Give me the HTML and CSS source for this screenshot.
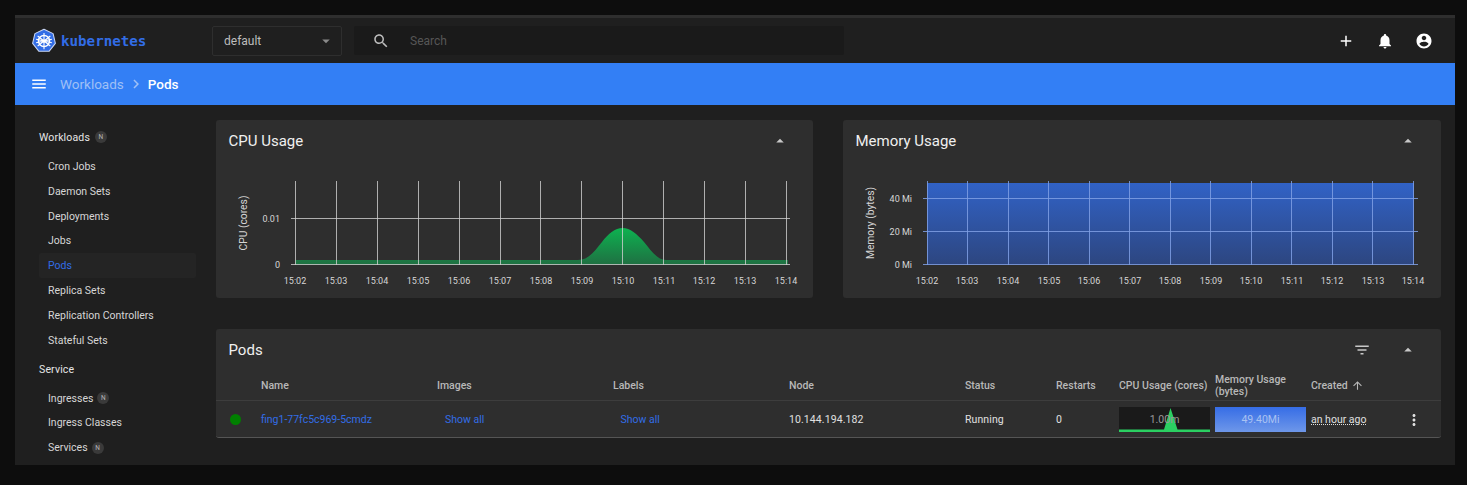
FILE: index.html
```html
<!DOCTYPE html>
<html>
<head>
   <title>Pods - Kubernetes Dashboard</title>
   <link rel="stylesheet" href="styles.css">
</head>
<body>
   <div class="app">
      <header class="toolbar">
         <div class="brand">
            <svg class="logo" viewBox="0 0 32 32" width="26" height="26">
               <path d="M16 1.5l11.2 5.4 2.8 12.1-7.8 9.7H9.8L2 19 4.800 6.900z" fill="#326de6" stroke="#c9d6f2" stroke-width="1.300" stroke-linejoin="round"/>
               <g fill="none" stroke="#fff">
                  <circle cx="16" cy="16" r="6.800" stroke-width="1.800"/>
                  <path d="M16 6v20M8.200 9.800l15.600 12.400M23.800 9.800L8.200 22.200M6.300 18.200l19.400-4.400M25.700 18.200L6.300 13.800" stroke-width="1.300"/>
               </g>
               <circle cx="16" cy="16" r="2" fill="#fff"/>
            </svg>
            <span class="brand-name">kubernetes</span>
         </div>
         <div class="ns-select">
            <span>default</span>
            <svg class="icon-14" viewBox="0 0 24 24"><path d="M7 10l5 5 5-5z"/></svg>
         </div>
         <div class="search">
            <svg class="icon-18" viewBox="0 0 24 24"><path d="M15.500 14h-.79l-.28-.27C15.410 12.590 16 11.110 16 9.500 16 5.910 13.090 3 9.500 3S3 5.910 3 9.500 5.910 16 9.500 16c1.610 0 3.090-.59 4.230-1.570l.27.28v.79l5 4.990L20.490 19l-4.990-5zm-6 0C7.010 14 5 11.990 5 9.500S7.010 5 9.500 5 14 7.010 14 9.500 11.990 14 9.500 14z"/></svg>
            <span>Search</span>
         </div>
         <div class="actions">
            <svg viewBox="0 0 24 24"><path d="M19 13h-6v6h-2v-6H5v-2h6V5h2v6h6v2z"/></svg>
            <svg viewBox="0 0 24 24"><path d="M12 22c1.100 0 2-.9 2-2h-4c0 1.100.89 2 2 2zm6-6v-5c0-3.070-1.640-5.640-4.500-6.320V4c0-.83-.67-1.500-1.500-1.500s-1.500.67-1.500 1.500v.68C7.630 5.360 6 7.920 6 11v5l-2 2v1h16v-1l-2-2z"/></svg>
            <svg viewBox="0 0 24 24"><path d="M12 2C6.480 2 2 6.480 2 12s4.480 10 10 10 10-4.480 10-10S17.520 2 12 2zm0 3c1.660 0 3 1.340 3 3s-1.340 3-3 3-3-1.340-3-3 1.340-3 3-3zm0 14.200c-2.500 0-4.710-1.280-6-3.220.03-1.990 4-3.080 6-3.080 1.990 0 5.970 1.090 6 3.080-1.290 1.940-3.500 3.220-6 3.220z"/></svg>
         </div>
      </header>

      <div class="crumbs">
         <svg class="menu-icon" viewBox="0 0 24 24"><path d="M3 18h18v-2H3v2zm0-5h18v-2H3v2zm0-7v2h18V6H3z"/></svg>
         <span class="crumb">Workloads</span>
         <svg class="crumb-sep" viewBox="0 0 24 24"><path d="M10 6L8.590 7.410 13.170 12l-4.580 4.590L10 18l6-6z"/></svg>
         <span class="crumb-current">Pods</span>
      </div>

      <div class="content">
         <nav class="sidebar">
            <div class="nav-head">Workloads <span class="badge">N</span></div>
            <a class="nav-item">Cron Jobs</a>
            <a class="nav-item">Daemon Sets</a>
            <a class="nav-item">Deployments</a>
            <a class="nav-item">Jobs</a>
            <a class="nav-item active">Pods</a>
            <a class="nav-item">Replica Sets</a>
            <a class="nav-item">Replication Controllers</a>
            <a class="nav-item">Stateful Sets</a>
            <div class="nav-head">Service</div>
            <a class="nav-item">Ingresses <span class="badge">N</span></a>
            <a class="nav-item">Ingress Classes</a>
            <a class="nav-item">Services <span class="badge">N</span></a>
         </nav>

         <main class="main">
            <div class="charts">
               <section class="card">
                  <div class="card-head">
                     <h2>CPU Usage</h2>
                     <svg class="collapse" viewBox="0 0 24 24"><path d="M7 14l5-5 5 5z"/></svg>
                  </div>
                  <svg class="chart" viewBox="0 42 597 136">
                     <defs>
                        <linearGradient id="green" x1="0" y1="0" x2="0" y2="1">
                           <stop offset="0" stop-color="#0db250"/>
                           <stop offset="1" stop-color="#1f7042"/>
                        </linearGradient>
                     </defs>
                     <path fill="url(#green)" d="M79 144.500V140H362C372 140 378 132 386 122 392 114 399 108 406.700 108 414 108 421 114 428 122 436 132 442 140 450 140H572V144.500z"/>
                     <g class="grid">
                        <path d="M79.500 61v84M120.500 61v84M161.500 61v84M202.500 61v84M243.500 61v84M284.500 61v84M324.500 61v84M365.500 61v84M406.500 61v84M447.500 61v84M488.500 61v84M529.500 61v84M570.500 61v84"/>
                        <path d="M75 98.500H574M75 144.500H574"/>
                     </g>
                     <g class="tick-x" text-anchor="middle">
                        <text x="79" y="164">15:02</text><text x="120" y="164">15:03</text><text x="161" y="164">15:04</text><text x="202" y="164">15:05</text><text x="243" y="164">15:06</text><text x="284" y="164">15:07</text><text x="325" y="164">15:08</text><text x="366" y="164">15:09</text><text x="407" y="164">15:10</text><text x="448" y="164">15:11</text><text x="488" y="164">15:12</text><text x="529" y="164">15:13</text><text x="570" y="164">15:14</text>
                     </g>
                     <g class="tick-x" text-anchor="end">
                        <text x="64" y="101.500">0.01</text><text x="64" y="148">0</text>
                     </g>
                     <text class="axis-title" text-anchor="middle" transform="translate(31 103) rotate(-90)">CPU (cores)</text>
                  </svg>
               </section>
               <section class="card">
                  <div class="card-head">
                     <h2>Memory Usage</h2>
                     <svg class="collapse" viewBox="0 0 24 24"><path d="M7 14l5-5 5 5z"/></svg>
                  </div>
                  <svg class="chart" viewBox="0 42 598 136">
                     <defs>
                        <linearGradient id="blue" x1="0" y1="0" x2="0" y2="1">
                           <stop offset="0" stop-color="#3162c6"/>
                           <stop offset="1" stop-color="#2d4680"/>
                        </linearGradient>
                     </defs>
                     <rect x="84" y="63" width="487" height="81.500" fill="url(#blue)"/>
                     <g class="grid-blue">
                        <path d="M84.500 61v84M124.500 61v84M165.500 61v84M205.500 61v84M246.500 61v84M286.500 61v84M327.500 61v84M367.500 61v84M408.500 61v84M448.500 61v84M489.500 61v84M529.500 61v84M570.500 61v84"/>
                        <path d="M80 78.500H575M80 111.500H575M80 144.500H575"/>
                     </g>
                     <g class="tick-x" text-anchor="middle">
                        <text x="84" y="164">15:02</text><text x="124" y="164">15:03</text><text x="165" y="164">15:04</text><text x="206" y="164">15:05</text><text x="246" y="164">15:06</text><text x="287" y="164">15:07</text><text x="327" y="164">15:08</text><text x="368" y="164">15:09</text><text x="408" y="164">15:10</text><text x="449" y="164">15:11</text><text x="489" y="164">15:12</text><text x="530" y="164">15:13</text><text x="570" y="164">15:14</text>
                     </g>
                     <g class="tick-x" text-anchor="end">
                        <text x="69" y="82">40 Mi</text><text x="69" y="115">20 Mi</text><text x="69" y="148">0 Mi</text>
                     </g>
                     <text class="axis-title" text-anchor="middle" transform="translate(31 103) rotate(-90)">Memory (bytes)</text>
                  </svg>
               </section>
            </div>

            <section class="card pods">
               <div class="card-head">
                  <h2>Pods</h2>
                  <svg class="filter" viewBox="0 0 24 24"><path d="M10 18h4v-2h-4v2zM3 6v2h18V6H3zm3 7h12v-2H6v2z"/></svg>
                  <svg class="collapse" viewBox="0 0 24 24"><path d="M7 14l5-5 5 5z"/></svg>
               </div>
               <div class="row row-head">
                  <span></span>
                  <span>Name</span>
                  <span>Images</span>
                  <span>Labels</span>
                  <span>Node</span>
                  <span>Status</span>
                  <span>Restarts</span>
                  <span>CPU Usage (cores)</span>
                  <span>Memory Usage (bytes)</span>
                  <span class="sorted">Created
                     <svg viewBox="0 0 24 24"><path d="M4 12l1.410 1.410L11 7.830V20h2V7.830l5.580 5.590L20 12l-8-8-8 8z"/></svg>
                  </span>
               </div>
               <div class="row row-body">
                  <span class="dot"></span>
                  <a class="link">fing1-77fc5c969-5cmdz</a>
                  <a class="link show-all">Show all</a>
                  <a class="link show-all-2">Show all</a>
                  <span class="cell">10.144.194.182</span>
                  <span class="cell">Running</span>
                  <span class="cell">0</span>
                  <div class="spark">
                     <svg viewBox="0 0 91 25" preserveAspectRatio="none"><path d="M0 22.500H45L51.500 1 58.500 22.500H91V25H0z" fill="#2bd062"/></svg>
                     <span>1.00m</span>
                  </div>
                  <div class="spark spark-mem"><span>49.40Mi</span></div>
                  <span class="age">an hour ago</span>
                  <svg class="more" viewBox="0 0 24 24"><path d="M12 8c1.100 0 2-.9 2-2s-.9-2-2-2-2 .9-2 2 .9 2 2 2zm0 2c-1.100 0-2 .9-2 2s.9 2 2 2 2-.9 2-2-.9-2-2-2zm0 6c-1.100 0-2 .9-2 2s.9 2 2 2 2-.9 2-2-.9-2-2-2z"/></svg>
               </div>
            </section>
         </main>
      </div>
   </div>
</body>
</html>
```

FILE: styles.css
```css
html, body {
   height: 100%;
}

body {
   margin: 0;
   padding: 15px 0 0 15px;
   box-sizing: border-box;
   overflow: hidden;
   background-color: #0d0d0d;
   font-family: Roboto, 'Liberation Sans', sans-serif;
   font-size: 10.5px;
   color: #e6e6e6;
}

svg {
   fill: currentColor;
   flex: none;
}

.app {
   width: 1440px;
   height: 450px;
   overflow: hidden;
   background-color: #1f1f1f;
   border-top: 3px solid #2e2e2e;
   box-sizing: border-box;
}

.toolbar {
   height: 45px;
   display: flex;
   align-items: center;
   padding-left: 16px;
   background-color: #1f1f1f;
}

.brand {
   width: 181px;
   display: flex;
   align-items: center;
   gap: 4px;
}

.brand-name {
   font-family: 'DejaVu Sans Mono', monospace;
   font-weight: bold;
   font-size: 14.2px;
   color: #326de6;
}

.ns-select {
   width: 130px;
   height: 30px;
   box-sizing: border-box;
   margin-right: 12px;
   padding: 0 6px 0 11px;
   display: flex;
   align-items: center;
   justify-content: space-between;
   border: 1px solid #2e2e2e;
   border-radius: 2px;
   font-size: 12px;
   color: #bdbdbd;
}

.icon-14 {
   width: 18px;
   height: 18px;
   color: #8a8a8a;
}

.search {
   width: 490px;
   height: 29px;
   display: flex;
   align-items: center;
   gap: 20px;
   padding-left: 18px;
   box-sizing: border-box;
   background-color: #1a1a1a;
   border-radius: 2px;
   font-size: 12px;
   color: #565656;
}

.icon-18 {
   width: 18px;
   height: 18px;
   color: #bdbdbd;
}

.actions {
   margin-left: auto;
   margin-right: 22px;
   display: flex;
   gap: 21px;
   color: #fff;
}

.actions svg {
   width: 18px;
   height: 18px;
}

.crumbs {
   height: 42px;
   display: flex;
   align-items: center;
   padding-left: 15px;
   background-color: #337ff5;
   font-size: 13.5px;
   font-weight: 500;
}

.menu-icon {
   width: 18px;
   height: 18px;
   margin-right: 12px;
   color: #fff;
}

.crumb {
   color: #9fc0f6;
   font-weight: 400;
}

.crumb-sep {
   width: 18px;
   height: 18px;
   margin: 0 3px;
   color: #9fc0f6;
}

.crumb-current {
   color: #fff;
}

.content {
   display: flex;
   height: 360px;
}

.sidebar {
   width: 157px;
   flex: none;
   padding: 20px 20px 0 24px;
   overflow: hidden;
}

.nav-head {
   height: 24px;
   margin: 4.6px 0;
   display: flex;
   align-items: center;
   gap: 5px;
   letter-spacing: 0.15px;
   color: #e6e6e6;
}

.nav-head:first-child {
   margin: 0 0 5.2px;
}

.nav-item {
   height: 24.8px;
   padding-left: 9px;
   display: flex;
   align-items: center;
   gap: 4px;
   border-radius: 2px;
   color: #d6d6d6;
}

.nav-item.active {
   background-color: #242424;
   color: #326de6;
}

.badge {
   width: 12px;
   height: 12px;
   display: inline-flex;
   align-items: center;
   justify-content: center;
   border-radius: 50%;
   background-color: #3a3a3a;
   font-size: 6.5px;
   color: #b5b5b5;
}

.main {
   flex: 1;
   padding: 15px 14px 0 0;
}

.charts {
   display: flex;
   gap: 30px;
}

.card {
   flex: 1;
   background-color: #2e2e2e;
   border-radius: 3px;
}

.charts .card:first-child {
   flex: 0 0 597px;
}

.card-head {
   height: 42px;
   display: flex;
   align-items: center;
   padding: 0 24px 0 12.5px;
}

.card-head h2 {
   margin: 0 auto 0 0;
   font-size: 15px;
   font-weight: 400;
   color: #f0f0f0;
}

.collapse {
   width: 18px;
   height: 18px;
   color: #c8c8c8;
}

.filter {
   width: 18px;
   height: 18px;
   margin-right: 28px;
   color: #c8c8c8;
}

.chart {
   display: block;
   width: 100%;
   height: 136px;
}

.grid path {
   fill: none;
   stroke: #cfcfcf;
   stroke-opacity: 0.8;
   stroke-width: 1;
}

.grid-blue path {
   fill: none;
   stroke: #7f9fe4;
   stroke-opacity: 0.85;
   stroke-width: 1;
}

.tick-x {
   font-size: 9px;
   fill: #d6d6d6;
}

.axis-title {
   font-size: 10.3px;
   fill: #d6d6d6;
}

.pods {
   margin-top: 31px;
   height: 109px;
   border-bottom: 1px solid #555;
   box-sizing: border-box;
}

.pods .card-head {
   height: 41px;
}

.row {
   display: grid;
   grid-template-columns: 45px 176px 176px 176px 176px 91px 63px 96px 96px 1fr;
   align-items: center;
}

.row-head {
   height: 31px;
   padding-top: 1px;
   border-bottom: 1px solid #3d3d3d;
   box-sizing: border-box;
   font-weight: 500;
   color: #b8b8b8;
   line-height: 12px;
}

.row-head span:nth-child(9) {
   padding-right: 12px;
}

.sorted {
   display: flex;
   align-items: center;
   gap: 3px;
}

.sorted svg {
   width: 13px;
   height: 13px;
}

.row-body {
   position: relative;
   height: 36px;
   color: #e0e0e0;
}

.cell {
   letter-spacing: 0.1px;
}

.dot {
   width: 11px;
   height: 11px;
   margin-left: 14px;
   border-radius: 50%;
   background-color: #008000;
}

.link {
   color: #326de6;
}

.show-all {
   padding-left: 8px;
}

.show-all-2 {
   padding-left: 7.5px;
}

.spark {
   position: relative;
   width: 91px;
   height: 25px;
   box-sizing: border-box;
   display: flex;
   align-items: center;
   justify-content: center;
   background-color: #1a1a1a;
   color: #9a9a9a;
}

.spark svg {
   position: absolute;
   left: 0;
   top: 0;
   width: 100%;
   height: 100%;
}

.spark span {
   position: relative;
}

.spark-mem {
   background-image: linear-gradient(#366de6, #6e97e9);
   color: #a9c2f2;
}

.age {
   text-decoration: underline dotted;
   text-underline-offset: 1px;
}

.more {
   position: absolute;
   right: 18px;
   top: 10px;
   width: 18px;
   height: 18px;
   color: #e0e0e0;
}
```
